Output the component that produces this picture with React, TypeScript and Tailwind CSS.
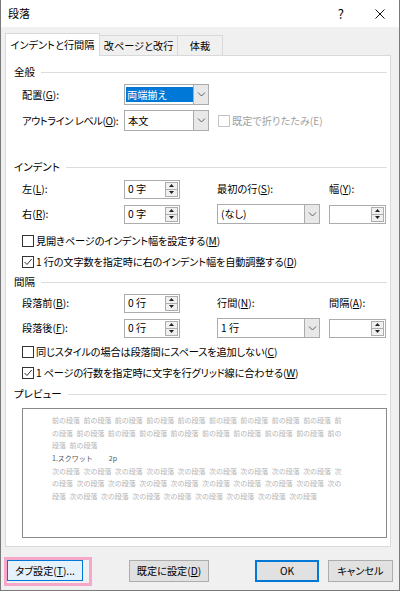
import type { ReactNode } from "react";

const ui = "font-['Noto_Sans_CJK_JP','Noto_Sans',sans-serif] [font-feature-settings:'palt']";

function Header({ title, className = "" }: { title: string; className?: string }) {
  return (
    <div className={`flex h-[16px] items-center gap-[6px] pl-[8px] pr-[3px] ${className}`}>
      <span className="text-[10.5px]">{title}</span>
      <div className="h-px flex-1 bg-[#dcdcdc]" />
    </div>
  );
}

function Chevron() {
  return (
    <svg width="9" height="5" viewBox="0 0 9 5">
      <path d="M1 0.5 L4.5 4 L8 0.5" stroke="#606060" strokeWidth="1" fill="none" />
    </svg>
  );
}

function Select({
  value,
  className = "",
  highlight = false,
}: {
  value: string;
  className?: string;
  highlight?: boolean;
}) {
  return (
    <div className={`flex border border-[#acacac] bg-white ${className}`}>
      <div className="flex flex-1 items-center">
        {highlight ? (
          <span className="ml-[1px] flex h-[15px] flex-1 items-center bg-[#0078d7] pl-[1px] text-white">
            {value}
          </span>
        ) : (
          <span className="pl-[3px]">{value}</span>
        )}
      </div>
      <div className="flex w-[15px] items-center justify-center border-l border-[#acacac] bg-[#e8e8e8]">
        <Chevron />
      </div>
    </div>
  );
}

function Spin({ value = "", className = "" }: { value?: string; className?: string }) {
  return (
    <div className={`flex h-[19px] items-center border border-[#acacac] bg-white ${className}`}>
      <span className="flex-1 pl-[3px]">{value}</span>
      <div className="mr-[1px] flex h-[15px] w-[13px] flex-col border border-[#adadad] bg-[#f0f0f0]">
        <div className="flex flex-1 items-center justify-center border-b border-[#adadad]">
          <svg width="5" height="3" viewBox="0 0 5 3">
            <path d="M2.5 0 L5 3 H0 Z" fill="#202020" />
          </svg>
        </div>
        <div className="flex flex-1 items-center justify-center">
          <svg width="5" height="3" viewBox="0 0 5 3">
            <path d="M0 0 H5 L2.5 3 Z" fill="#202020" />
          </svg>
        </div>
      </div>
    </div>
  );
}

function Box({ checked = false, disabled = false, className = "" }: { checked?: boolean; disabled?: boolean; className?: string }) {
  return (
    <span
      className={`flex h-[12px] w-[12px] shrink-0 items-center justify-center border bg-white ${
        disabled ? "border-[#c6c6c6]" : "border-[#333333]"
      } ${className}`}
    >
      {checked && (
        <svg width="10" height="10" viewBox="0 0 10 10">
          <path d="M1.5 5 L4 7.5 L8.7 2" stroke="#333333" strokeWidth="1" fill="none" />
        </svg>
      )}
    </span>
  );
}

function CheckRow({ checked = false, children, className = "" }: { checked?: boolean; children: ReactNode; className?: string }) {
  return (
    <div className={`flex h-[18px] items-center gap-[2px] pl-[16px] ${className}`}>
      <Box checked={checked} />
      <span className="tracking-[-0.15px]">{children}</span>
    </div>
  );
}

const before = "前の段落";
const after = "次の段落";
const preview: string[][] = [
  [...Array(9).fill(before), "前"],
  ["の段落", ...Array(8).fill(before), "前の"],
  ["段落", before],
  [],
  [...Array(9).fill(after), "次"],
  ["の段落", ...Array(8).fill(after), "次の"],
  ["段落", ...Array(8).fill(after)],
];

export default function App() {
  return (
    <div className={`h-[591px] w-[400px] overflow-hidden whitespace-nowrap border-x border-b border-[#7a7a7a] bg-[#f0f0f0] text-[10.2px] text-black ${ui}`}>
      {/* Title bar */}
      <div className="flex h-[27px] items-center bg-white pl-[7px]">
        <span className="text-[11px]">段落</span>
        <span className="ml-auto text-[13px]">?</span>
        <svg className="ml-[31px] mr-[14px]" width="10" height="10" viewBox="0 0 10 10">
          <path d="M0.5 0.5 L9.5 9.5 M9.5 0.5 L0.5 9.5" stroke="#111" strokeWidth="1" />
        </svg>
      </div>

      {/* Tabs */}
      <div className="-mb-px flex items-end pl-[4px] pt-[6px]">
        <div className="relative z-10 flex h-[23px] w-[95px] items-center justify-center border-x border-t border-[#d9d9d9] bg-white">
          インデントと行間隔
        </div>
        <div className="mb-[1px] flex h-[20px] w-[78px] items-center justify-center border-r border-t border-[#d9d9d9] bg-[#f0f0f0]">
          改ページと改行
        </div>
        <div className="mb-[1px] flex h-[20px] w-[45px] items-center justify-center border-r border-t border-[#d9d9d9] bg-[#f0f0f0]">
          体裁
        </div>
      </div>

      {/* Panel */}
      <div className="ml-[4px] h-[492px] w-[386px] border border-[#d9d9d9] bg-white">
        <Header title="全般" className="mt-[8px]" />
        <div className="mt-[4px] flex h-[21px] items-center pl-[16px]">
          <span className="w-[102px]">
            配置(<span className="underline">G</span>):
          </span>
          <Select className="h-[21px] w-[85px]" value="両端揃え" highlight />
        </div>
        <div className="mt-[5px] flex h-[21px] items-center pl-[16px]">
          <span className="w-[102px] tracking-[-0.4px]">
            アウトライン レベル(<span className="underline">O</span>):
          </span>
          <Select className="h-[21px] w-[85px]" value="本文" />
          <Box disabled className="ml-[9px]" />
          <span className="ml-[2px] text-[#a0a0a0]">既定で折りたたみ(E)</span>
        </div>

        <Header title="インデント" className="mt-[28px]" />
        <div className="mt-[4px] flex h-[20px] items-center pl-[16px]">
          <span className="w-[102px]">
            左(<span className="underline">L</span>):
          </span>
          <Spin className="w-[56px]" value="0 字" />
          <span className="ml-[37px] w-[103px]">
            最初の行(<span className="underline">S</span>):
          </span>
          <span className="ml-[9px]">
            幅(<span className="underline">Y</span>):
          </span>
        </div>
        <div className="mt-[5px] flex h-[20px] items-center pl-[16px]">
          <span className="w-[102px]">
            右(<span className="underline">R</span>):
          </span>
          <Spin className="w-[56px]" value="0 字" />
          <Select className="ml-[37px] h-[20px] w-[103px]" value="(なし)" />
          <Spin className="ml-[9px] w-[57px]" />
        </div>
        <CheckRow className="mt-[8px]">
          見開きページのインデント幅を設定する(<span className="underline">M</span>)
        </CheckRow>
        <CheckRow checked className="mt-[3px]">
          1 行の文字数を指定時に右のインデント幅を自動調整する(<span className="underline">D</span>)
        </CheckRow>

        <Header title="間隔" className="mt-[3px]" />
        <div className="mt-[3px] flex h-[20px] items-center pl-[16px]">
          <span className="w-[102px]">
            段落前(<span className="underline">B</span>):
          </span>
          <Spin className="w-[56px]" value="0 行" />
          <span className="ml-[37px] w-[103px]">
            行間(<span className="underline">N</span>):
          </span>
          <span className="ml-[9px]">
            間隔(<span className="underline">A</span>):
          </span>
        </div>
        <div className="mt-[5px] flex h-[20px] items-center pl-[16px]">
          <span className="w-[102px]">
            段落後(<span className="underline">F</span>):
          </span>
          <Spin className="w-[56px]" value="0 行" />
          <Select className="ml-[37px] h-[20px] w-[103px]" value="1 行" />
          <Spin className="ml-[9px] w-[57px]" />
        </div>
        <CheckRow className="mt-[5px]">
          同じスタイルの場合は段落間にスペースを追加しない(<span className="underline">C</span>)
        </CheckRow>
        <CheckRow checked className="mt-[3px]">
          1 ページの行数を指定時に文字を行グリッド線に合わせる(<span className="underline">W</span>)
        </CheckRow>

        <Header title="プレビュー" className="mt-[4px]" />
        <div className="ml-[16px] mt-[6px] h-[130px] w-[365px] border border-[#8a8a8a] bg-white pl-[29px] pt-[5px] text-[7px] leading-[12.7px] [font-feature-settings:normal]">
          {preview.map((words, i) =>
            words.length === 0 ? (
              <div key={i} className="flex h-[12.7px] text-[#555555]">
                <span>1.スクワット</span>
                <span className="ml-[16px]">2p</span>
              </div>
            ) : (
              <div key={i} className="flex h-[12.7px] gap-[3.4px] text-[#b4b4b4]">
                {words.map((w, j) => (
                  <span key={j}>{w}</span>
                ))}
              </div>
            )
          )}
        </div>
      </div>

      {/* Buttons */}
      <div className="mt-[10px] flex items-start">
        <div className="ml-[3px] border-[3px] border-[#f5a8c9] pb-[2px] pr-[6px]">
          <button className="flex h-[21px] w-[76px] items-center justify-center border border-[#0078d7] bg-[#e5f1fb]">
            タブ設定(<span className="underline">T</span>)...
          </button>
        </div>
        <button className="ml-[37px] mt-[3px] flex h-[22px] w-[80px] items-center justify-center border border-[#adadad] bg-[#e1e1e1]">
          既定に設定(<span className="underline">D</span>)
        </button>
        <button className="ml-[46px] mt-[3px] flex h-[22px] w-[64px] items-center justify-center border-2 border-[#0078d7] bg-[#e1e1e1]">
          OK
        </button>
        <button className="ml-[9px] mt-[3px] flex h-[22px] w-[65px] items-center justify-center border border-[#adadad] bg-[#e1e1e1]">
          キャンセル
        </button>
      </div>
    </div>
  );
}
